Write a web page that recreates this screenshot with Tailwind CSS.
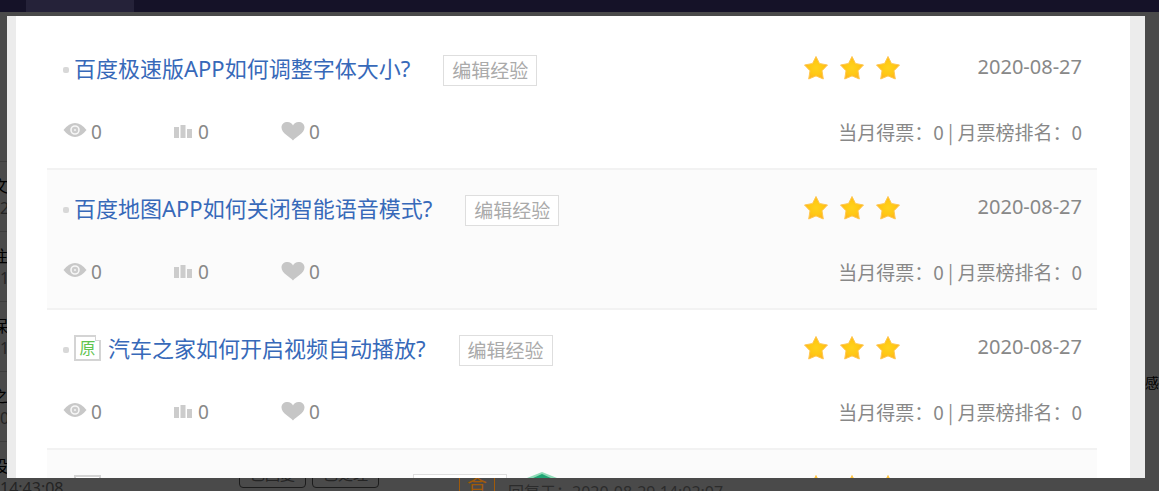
<!DOCTYPE html>
<html lang="zh-CN">
<head>
    <meta charset="UTF-8">
    <meta name="viewport" content="width=device-width, initial-scale=1.0">
    <title>经验列表</title>
    <script src="https://cdn.jsdelivr.net/npm/@tailwindcss/browser@4"></script>
</head>
<body class="relative flex h-screen flex-col overflow-hidden bg-[#4a4a4a] font-['Noto_Sans','Noto_Sans_CJK_SC',sans-serif]">
    <!-- Shared icons -->
    <svg class="absolute size-0">
        <defs>
            <radialGradient id="gold">
                <stop offset="0" stop-color="#ffd21c"/>
                <stop offset="0.6" stop-color="#ffc814"/>
                <stop offset="1" stop-color="#ffb41e"/>
            </radialGradient>
            <symbol id="star" viewBox="0 0 26 26">
                <path d="M13 1.500 16.500 8.500 24.500 10 19 15.800 20.300 24 13 20.900 5.700 24 7 15.800 1.500 10 9.500 8.500Z" fill="url(#gold)" stroke="#ffc852" stroke-width="1" stroke-linejoin="round"/>
            </symbol>
            <symbol id="eye" viewBox="0 0 24 16">
                <path d="M.5 8Q6 1 12 1T23.5 8Q18 15 12 15T.5 8Z" fill="#c8c8c8"/>
                <circle cx="12" cy="8" r="4" fill="#ccc" stroke="#f7f7f7" stroke-width="1.6"/>
                <circle cx="12" cy="8" r="1.1" fill="#f3f3f3"/>
            </symbol>
            <symbol id="bars" viewBox="0 0 18 14">
                <path d="M0 2h5v11H0zM6.500 0h5v13h-5zM13 4h5v9h-5z" fill="#ccc"/>
            </symbol>
            <symbol id="heart" viewBox="0 0 24 20">
                <path d="M12 19.500C9 15.500 .5 12.500 .5 6.500.5 3 3 1 6.500 1 9 1 11 2.200 12 4.500 13 2.200 15 1 17.500 1 21 1 23.500 3 23.500 6.500 23.500 12.500 15 15.500 12 19.500Z" fill="#c6c6c6"/>
            </symbol>
        </defs>
    </svg>

    <!-- Dimmed page -->
    <header class="flex h-3 shrink-0 bg-[#151228] pl-[26px]">
        <div class="w-27 bg-[#252239]"></div>
    </header>
    <main class="flex min-h-0 flex-1 text-base leading-[22px] text-[#242424]">
        <ul class="w-16 shrink-0 whitespace-nowrap pt-[80px]">
            <li class="h-[70px] border-b border-[#3c3c3c]"></li>
            <li class="h-[70px] border-b border-[#3c3c3c] pt-[13px]"><p class="-ml-2 text-black">文章</p><p>21:16:40</p></li>
            <li class="h-[70px] border-b border-[#3c3c3c] pt-[13px]"><p class="-ml-2 text-black">往打</p><p>17:20:11</p></li>
            <li class="h-[70px] border-b border-[#3c3c3c] pt-[13px]"><p class="-ml-2 text-black">保存</p><p>16:02:35</p></li>
            <li class="h-[70px] border-b border-[#3c3c3c] pt-[13px]"><p class="-ml-2 text-black">之后</p><p>09:31:26</p></li>
            <li class="h-[70px] pt-[13px]"><p class="-ml-2 text-black">设置</p><p>14:43:08</p></li>
        </ul>
        <section class="flex min-w-0 flex-1 items-end overflow-hidden pl-[175px]">
            <div class="mb-[3px] flex gap-[6px]">
                <button class="h-7 w-[67px] rounded border border-[#1c1c1c] text-[15px] leading-5">已回复</button>
                <button class="h-7 w-[67px] rounded border border-[#1c1c1c] text-[15px] leading-5">已处理</button>
            </div>
            <div class="ml-[80px] -mb-2 h-9 w-9 border border-[#a05a0a] text-center text-xl leading-9 text-[#a05a0a]">答</div>
            <p class="ml-[13px] -mb-3 whitespace-nowrap text-[#2c2c2c]">回复于：2020-08-29 14:02:07</p>
        </section>
        <p class="w-[14px] shrink-0 overflow-hidden pt-[361px] text-sm text-black">感</p>
    </main>

    <!-- List panel -->
    <div class="absolute top-4 right-[14px] bottom-[13px] left-[7px] overflow-hidden bg-[#ececec] pr-[15px] pl-[9px]">
        <div class="h-full overflow-hidden bg-white pr-[33px] pl-[31px] pt-[14px]">
            <article class="flex h-[140px] flex-col justify-between border-b-2 border-[#f2f2f2] pt-5 pr-[15px] pb-5 pl-4">
                <div class="flex h-9 items-center">
                    <i class="mt-1 mr-[5px] h-[6px] w-[6px] rounded-xs bg-[#d8d8d8]"></i>
                    <a href="#" class="text-[22px] leading-9 whitespace-nowrap text-[#3769b9]">百度极速版APP如何调整字体大小?</a>
                    <button class="mt-[5px] ml-[33px] h-[31px] border border-[#dedede] bg-white px-2 text-[19px] leading-7 whitespace-nowrap text-[#aaa]">编辑经验</button>
                    <div class="ml-auto flex gap-[10px]">
                        <svg class="size-[26px]"><use href="#star"/></svg>
                        <svg class="size-[26px]"><use href="#star"/></svg>
                        <svg class="size-[26px]"><use href="#star"/></svg>
                    </div>
                    <time class="w-[181px] pb-[2px] text-right text-xl text-[#888]">2020-08-27</time>
                </div>
                <div class="flex h-8 items-center text-[19px] text-[#888]">
                    <span class="flex w-[111px] items-center gap-1"><svg class="mb-1 h-4 w-6"><use href="#eye"/></svg>0</span>
                    <span class="flex w-[107px] items-center gap-[6px]"><svg class="h-[14px] w-[18px]"><use href="#bars"/></svg>0</span>
                    <span class="flex items-center gap-1"><svg class="mb-[2px] h-5 w-6"><use href="#heart"/></svg>0</span>
                    <p class="ml-auto font-['Noto_Sans_CJK_SC',sans-serif] whitespace-nowrap">当月得票：0 | 月票榜排名：0</p>
                </div>
            </article>
            <article class="flex h-[140px] flex-col justify-between border-b-2 border-[#f2f2f2] bg-[#fbfbfb] pt-5 pr-[15px] pb-5 pl-4">
                <div class="flex h-9 items-center">
                    <i class="mt-1 mr-[5px] h-[6px] w-[6px] rounded-xs bg-[#d8d8d8]"></i>
                    <a href="#" class="text-[22px] leading-9 whitespace-nowrap text-[#3769b9]">百度地图APP如何关闭智能语音模式?</a>
                    <button class="mt-[5px] ml-[33px] h-[31px] border border-[#dedede] bg-white px-2 text-[19px] leading-7 whitespace-nowrap text-[#aaa]">编辑经验</button>
                    <div class="ml-auto flex gap-[10px]">
                        <svg class="size-[26px]"><use href="#star"/></svg>
                        <svg class="size-[26px]"><use href="#star"/></svg>
                        <svg class="size-[26px]"><use href="#star"/></svg>
                    </div>
                    <time class="w-[181px] pb-[2px] text-right text-xl text-[#888]">2020-08-27</time>
                </div>
                <div class="flex h-8 items-center text-[19px] text-[#888]">
                    <span class="flex w-[111px] items-center gap-1"><svg class="mb-1 h-4 w-6"><use href="#eye"/></svg>0</span>
                    <span class="flex w-[107px] items-center gap-[6px]"><svg class="h-[14px] w-[18px]"><use href="#bars"/></svg>0</span>
                    <span class="flex items-center gap-1"><svg class="mb-[2px] h-5 w-6"><use href="#heart"/></svg>0</span>
                    <p class="ml-auto font-['Noto_Sans_CJK_SC',sans-serif] whitespace-nowrap">当月得票：0 | 月票榜排名：0</p>
                </div>
            </article>
            <article class="flex h-[140px] flex-col justify-between border-b-2 border-[#f2f2f2] pt-5 pr-[15px] pb-5 pl-4">
                <div class="flex h-9 items-center">
                    <i class="mt-1 mr-[5px] h-[6px] w-[6px] rounded-xs bg-[#d8d8d8]"></i>
                    <span class="relative mr-[7px] h-[26px] w-[27px] border-2 border-[#d4d4d4] bg-white text-center text-base leading-[22px] text-[#5fc44f]">原<i class="absolute -top-[2px] -right-[2px] h-[6px] w-[6px] border-b border-l border-[#d4d4d4] bg-white"></i></span>
                    <a href="#" class="text-[22px] leading-9 whitespace-nowrap text-[#3769b9]">汽车之家如何开启视频自动播放?</a>
                    <button class="mt-[5px] ml-[33px] h-[31px] border border-[#dedede] bg-white px-2 text-[19px] leading-7 whitespace-nowrap text-[#aaa]">编辑经验</button>
                    <div class="ml-auto flex gap-[10px]">
                        <svg class="size-[26px]"><use href="#star"/></svg>
                        <svg class="size-[26px]"><use href="#star"/></svg>
                        <svg class="size-[26px]"><use href="#star"/></svg>
                    </div>
                    <time class="w-[181px] pb-[2px] text-right text-xl text-[#888]">2020-08-27</time>
                </div>
                <div class="flex h-8 items-center text-[19px] text-[#888]">
                    <span class="flex w-[111px] items-center gap-1"><svg class="mb-1 h-4 w-6"><use href="#eye"/></svg>0</span>
                    <span class="flex w-[107px] items-center gap-[6px]"><svg class="h-[14px] w-[18px]"><use href="#bars"/></svg>0</span>
                    <span class="flex items-center gap-1"><svg class="mb-[2px] h-5 w-6"><use href="#heart"/></svg>0</span>
                    <p class="ml-auto font-['Noto_Sans_CJK_SC',sans-serif] whitespace-nowrap">当月得票：0 | 月票榜排名：0</p>
                </div>
            </article>
            <!-- Next row, cut off by the panel edge -->
            <article class="flex h-[140px] items-start bg-[#fbfbfb] pt-6 pr-[15px] pl-[27px]">
                <span class="mt-[1px] h-[26px] w-[27px] border-2 border-[#d4d4d4] bg-white"></span>
                <span class="ml-[312px] h-[31px] w-[94px] border border-[#dedede] bg-white"></span>
                <svg class="ml-[19px] -mt-[2px] h-8 w-[32px]" viewBox="0 0 32 32">
                    <path d="M16 0 31 6V24L16 32 1 24V6Z" fill="#8fdcb8"/>
                    <path d="M16 2 27 7V23L16 29 5 23V7Z" fill="#1fa574"/>
                </svg>
                <div class="mr-[181px] ml-auto flex gap-[10px]">
                    <svg class="size-[26px]"><use href="#star"/></svg>
                    <svg class="size-[26px]"><use href="#star"/></svg>
                    <svg class="size-[26px]"><use href="#star"/></svg>
                </div>
            </article>
        </div>
    </div>
</body>
</html>
